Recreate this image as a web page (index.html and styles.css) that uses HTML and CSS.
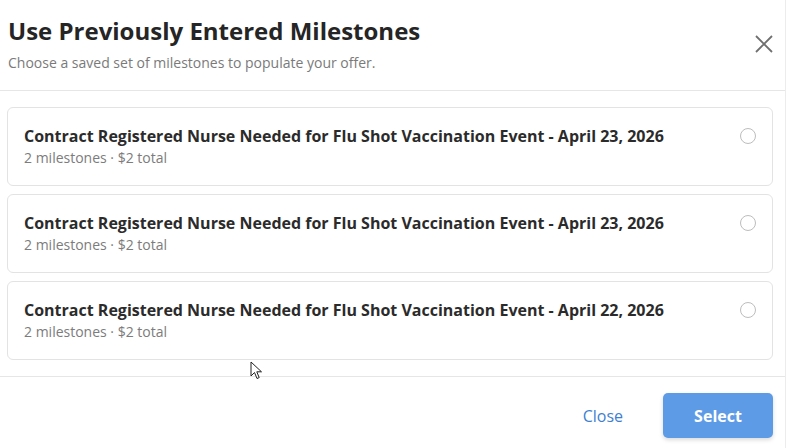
FILE: index.html
```html
<!DOCTYPE html>
<html lang="en">
<head>
    <meta charset="UTF-8">
    <meta name="viewport" content="width=device-width, initial-scale=1.0">
    <title>Use Previously Entered Milestones</title>
    <link rel="stylesheet" href="styles.css">
</head>
<body>
<div class="dialog">
    <div class="dialog-header">
        <div>
            <h1 class="dialog-title">Use Previously Entered Milestones</h1>
            <p class="dialog-subtitle">Choose a saved set of milestones to populate your offer.</p>
        </div>
        <button class="close-x" type="button" aria-label="Close">
            <svg width="18" height="18" viewBox="0 0 18 18">
                <path d="M1 1 L17 17 M17 1 L1 17" stroke="#6f6f6f" stroke-width="1.8" fill="none"/>
            </svg>
        </button>
    </div>

    <div class="dialog-body">
        <label class="milestone-card">
            <div>
                <div class="card-title">Contract Registered Nurse Needed for Flu Shot Vaccination Event - April 23, 2026</div>
                <div class="card-meta">2 milestones · $2 total</div>
            </div>
            <span class="radio"></span>
        </label>
        <label class="milestone-card">
            <div>
                <div class="card-title">Contract Registered Nurse Needed for Flu Shot Vaccination Event - April 23, 2026</div>
                <div class="card-meta">2 milestones · $2 total</div>
            </div>
            <span class="radio"></span>
        </label>
        <label class="milestone-card">
            <div>
                <div class="card-title">Contract Registered Nurse Needed for Flu Shot Vaccination Event - April 22, 2026</div>
                <div class="card-meta">2 milestones · $2 total</div>
            </div>
            <span class="radio"></span>
        </label>
    </div>

    <div class="dialog-footer">
        <button class="btn-link" type="button">Close</button>
        <button class="btn-primary" type="button">Select</button>
    </div>

    <!-- mouse pointer in the screenshot -->
    <svg class="cursor" width="14" height="20" viewBox="0 0 14 20">
        <path d="M1 1 L1 15 L4.5 11.5 L7 17.5 L9.2 16.6 L6.8 10.8 L11.5 10.8 Z" fill="#fff" stroke="#222" stroke-width="1"/>
    </svg>
</div>
</body>
</html>
```

FILE: styles.css
```css
body {
    font-family: "Open Sans", "Liberation Sans", sans-serif;
    margin: 0;
    padding: 0;
    background-color: #fff;
}
.dialog {
    position: relative;
    width: 785px;
    height: 448px;
    background-color: #fff;
    border-right: 1px solid #ececec;
    display: flex;
    flex-direction: column;
}
.dialog-header {
    display: flex;
    justify-content: space-between;
    align-items: flex-start;
    padding: 15px 12px 0 8px;
    height: 75px;
    border-bottom: 1px solid #e6e6e6;
}
.dialog-title {
    margin: 0;
    font-size: 24px;
    font-weight: 700;
    color: #252525;
    line-height: 32px;
}
.dialog-subtitle {
    margin: 6px 0 0 0;
    font-size: 14px;
    color: #7a7a7a;
    line-height: 20px;
}
.close-x {
    background: none;
    border: none;
    padding: 0;
    margin-top: 20px;
    cursor: pointer;
}
.dialog-body {
    padding: 16px 12px 0 7px;
    display: flex;
    flex-direction: column;
    gap: 8px;
    height: 269px;
    border-bottom: 1px solid #e6e6e6;
}
.milestone-card {
    display: flex;
    justify-content: space-between;
    align-items: center;
    height: 77px;
    padding: 0 16px 0 16px;
    border: 1px solid #e3e3e3;
    border-radius: 6px;
    cursor: pointer;
}
.card-title {
    font-size: 16px;
    font-weight: 700;
    color: #2b2b2b;
    line-height: 22px;
}
.card-meta {
    font-size: 14px;
    color: #7c7c7c;
    line-height: 20px;
    margin-top: 1px;
}
.radio {
    align-self: flex-start;
    width: 14px;
    height: 14px;
    border: 1px solid #bdbdbd;
    border-radius: 50%;
    flex-shrink: 0;
    margin-top: 20px;
}
.dialog-footer {
    display: flex;
    justify-content: flex-end;
    align-items: center;
    padding: 16px 12px 0 0;
    gap: 21px;
}
.btn-link {
    background: none;
    border: none;
    font-family: inherit;
    font-size: 16px;
    color: #3f7fd1;
    padding: 10px 19px;
    cursor: pointer;
}
.btn-primary {
    background-color: #5e9be6;
    color: #fff;
    border: none;
    border-radius: 5px;
    font-family: inherit;
    font-size: 16px;
    font-weight: 700;
    width: 110px;
    height: 45px;
    box-shadow: 0 2px 4px rgba(0, 0, 0, 0.15);
    cursor: pointer;
}
.cursor {
    position: absolute;
    left: 250px;
    top: 361px;
}
```
